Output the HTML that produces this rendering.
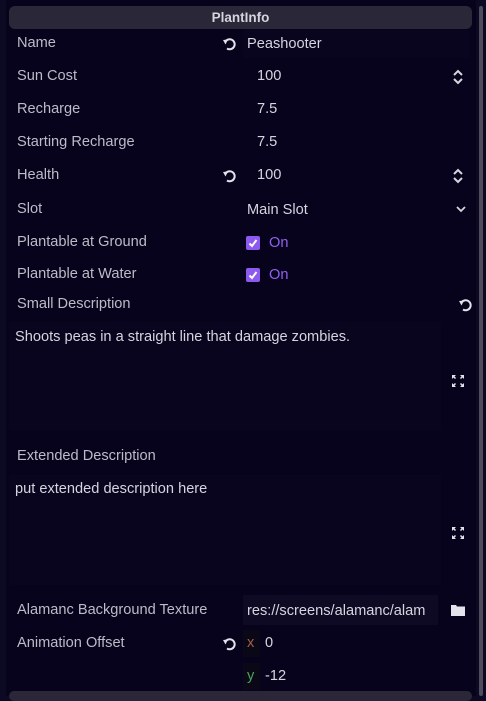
<!DOCTYPE html>
<html><head><style>
*{margin:0;padding:0;box-sizing:border-box}
body{width:486px;height:696px;background:#0c0922;font-family:"Liberation Sans",sans-serif;font-size:14.6px;color:#c9c7d2;position:relative;overflow:hidden}
.main{position:absolute;left:6px;top:0;width:470px;height:696px;background:#07031c}
.hdr{position:absolute;left:9px;top:6px;width:463px;height:23px;background:#2a2738;border-radius:6px;text-align:center;font-weight:bold;font-size:13.5px;line-height:23px;color:#d6d4de}
.sb{position:absolute;left:479px;top:6px;width:4px;height:690px;background:#4e4b5c;border-radius:2px}
.t{position:absolute;white-space:nowrap;line-height:18px}
.lbl{left:17px;color:#bdbbc7}
.v{color:#d6d4de}
.box{position:absolute;background:#09051f}
.ic{position:absolute}
.cb{position:absolute;width:14px;height:14px;background:#8d5af0;border-radius:2px}
.on{color:#9260f2}
.bot{position:absolute;left:9px;top:691px;width:463px;height:10px;background:#2a2738;border-radius:5px}
</style></head><body>
<div class="main"></div>
<div class="hdr">PlantInfo</div>
<div class="sb"></div>

<div class="box" style="left:243px;top:30px;width:227px;height:28px"></div>
<div class="t lbl" style="top:34px">Name</div>
<svg class="ic" style="left:222px;top:37px" width="15" height="14" viewBox="0 0 15 14"><path d="M3.5 4.5 A5 5 0 1 1 5 11.5" fill="none" stroke="#e4e2ea" stroke-width="2"/><path d="M1 3 L6 2.5 L3.5 7.5Z" fill="#e4e2ea"/></svg>
<div class="t v" style="left:247px;top:35px">Peashooter</div>

<div class="t lbl" style="top:67px">Sun Cost</div>
<div class="t v" style="left:257px;top:67px">100</div>
<svg class="ic" style="left:452px;top:69px" width="12" height="16" viewBox="0 0 12 16"><path d="M2 6 L6 2 L10 6 M2 10 L6 14 L10 10" fill="none" stroke="#d6d4de" stroke-width="2"/></svg>

<div class="t lbl" style="top:100px">Recharge</div>
<div class="t v" style="left:257px;top:100px">7.5</div>
<div class="t lbl" style="top:133px">Starting Recharge</div>
<div class="t v" style="left:257px;top:133px">7.5</div>

<div class="t lbl" style="top:166px">Health</div>
<svg class="ic" style="left:222px;top:169px" width="15" height="14" viewBox="0 0 15 14"><path d="M3.5 4.5 A5 5 0 1 1 5 11.5" fill="none" stroke="#e4e2ea" stroke-width="2"/><path d="M1 3 L6 2.5 L3.5 7.5Z" fill="#e4e2ea"/></svg>
<div class="t v" style="left:257px;top:166px">100</div>
<svg class="ic" style="left:452px;top:168px" width="12" height="16" viewBox="0 0 12 16"><path d="M2 6 L6 2 L10 6 M2 10 L6 14 L10 10" fill="none" stroke="#d6d4de" stroke-width="2"/></svg>

<div class="t lbl" style="top:200px">Slot</div>
<div class="t v" style="left:247px;top:201px">Main Slot</div>
<svg class="ic" style="left:455px;top:205px" width="12" height="8" viewBox="0 0 12 8"><path d="M2 2 L6 6 L10 2" fill="none" stroke="#d6d4de" stroke-width="1.8"/></svg>

<div class="t lbl" style="top:233px">Plantable at Ground</div>
<div class="cb" style="left:246px;top:236px"></div>
<svg class="ic" style="left:246px;top:236px" width="14" height="14" viewBox="0 0 14 14"><path d="M3.5 7.5 L6 10 L10.5 4" fill="none" stroke="#fff" stroke-width="2"/></svg>
<div class="t on" style="left:269px;top:234px">On</div>

<div class="t lbl" style="top:265px">Plantable at Water</div>
<div class="cb" style="left:246px;top:268px"></div>
<svg class="ic" style="left:246px;top:268px" width="14" height="14" viewBox="0 0 14 14"><path d="M3.5 7.5 L6 10 L10.5 4" fill="none" stroke="#fff" stroke-width="2"/></svg>
<div class="t on" style="left:269px;top:266px">On</div>

<div class="t lbl" style="top:295px">Small Description</div>
<svg class="ic" style="left:458px;top:298px" width="15" height="14" viewBox="0 0 15 14"><path d="M3.5 4.5 A5 5 0 1 1 5 11.5" fill="none" stroke="#e4e2ea" stroke-width="2"/><path d="M1 3 L6 2.5 L3.5 7.5Z" fill="#e4e2ea"/></svg>
<div class="box" style="left:9px;top:322px;width:432px;height:108px"></div>
<div class="t v" style="left:15px;top:328px">Shoots peas in a straight line that damage zombies.</div>
<svg class="ic" style="left:451px;top:374px" width="14" height="14" viewBox="0 0 14 14"><path d="M1 1h4L1 5Z M13 1h-4l4 4Z M1 13h4L1 9Z M13 13h-4l4-4Z" fill="#e4e2ea"/><path d="M2 2l2.5 2.5 M12 2l-2.5 2.5 M2 12l2.5-2.5 M12 12l-2.5-2.5" stroke="#e4e2ea" stroke-width="1.5"/></svg>

<div class="t lbl" style="top:447px">Extended Description</div>
<div class="box" style="left:9px;top:475px;width:432px;height:110px"></div>
<div class="t v" style="left:15px;top:480px">put extended description here</div>
<svg class="ic" style="left:451px;top:526px" width="14" height="14" viewBox="0 0 14 14"><path d="M1 1h4L1 5Z M13 1h-4l4 4Z M1 13h4L1 9Z M13 13h-4l4-4Z" fill="#e4e2ea"/><path d="M2 2l2.5 2.5 M12 2l-2.5 2.5 M2 12l2.5-2.5 M12 12l-2.5-2.5" stroke="#e4e2ea" stroke-width="1.5"/></svg>

<div class="t lbl" style="top:601px">Alamanc Background Texture</div>
<div class="box" style="left:243px;top:595px;width:195px;height:30px;background:#0e0a24"></div>
<div class="t v" style="left:247px;top:602px">res://screens/alamanc/alam</div>
<svg class="ic" style="left:451px;top:604px" width="14" height="12" viewBox="0 0 14 12"><path d="M0 1h5l1 1.5h8V12H0Z" fill="#e4e2ea"/></svg>

<div class="t lbl" style="top:634px">Animation Offset</div>
<svg class="ic" style="left:222px;top:637px" width="15" height="14" viewBox="0 0 15 14"><path d="M3.5 4.5 A5 5 0 1 1 5 11.5" fill="none" stroke="#e4e2ea" stroke-width="2"/><path d="M1 3 L6 2.5 L3.5 7.5Z" fill="#e4e2ea"/></svg>
<div class="box" style="left:243px;top:630px;width:17px;height:27px;background:#0a0716"></div>
<div class="t" style="left:247px;top:634px;color:#a65e4c">x</div>
<div class="t v" style="left:265px;top:634px">0</div>
<div class="box" style="left:243px;top:663px;width:17px;height:27px;background:#0a0716"></div>
<div class="t" style="left:247px;top:667px;color:#4fa35a">y</div>
<div class="t v" style="left:265px;top:667px">-12</div>
<div class="bot"></div>
</body></html>
